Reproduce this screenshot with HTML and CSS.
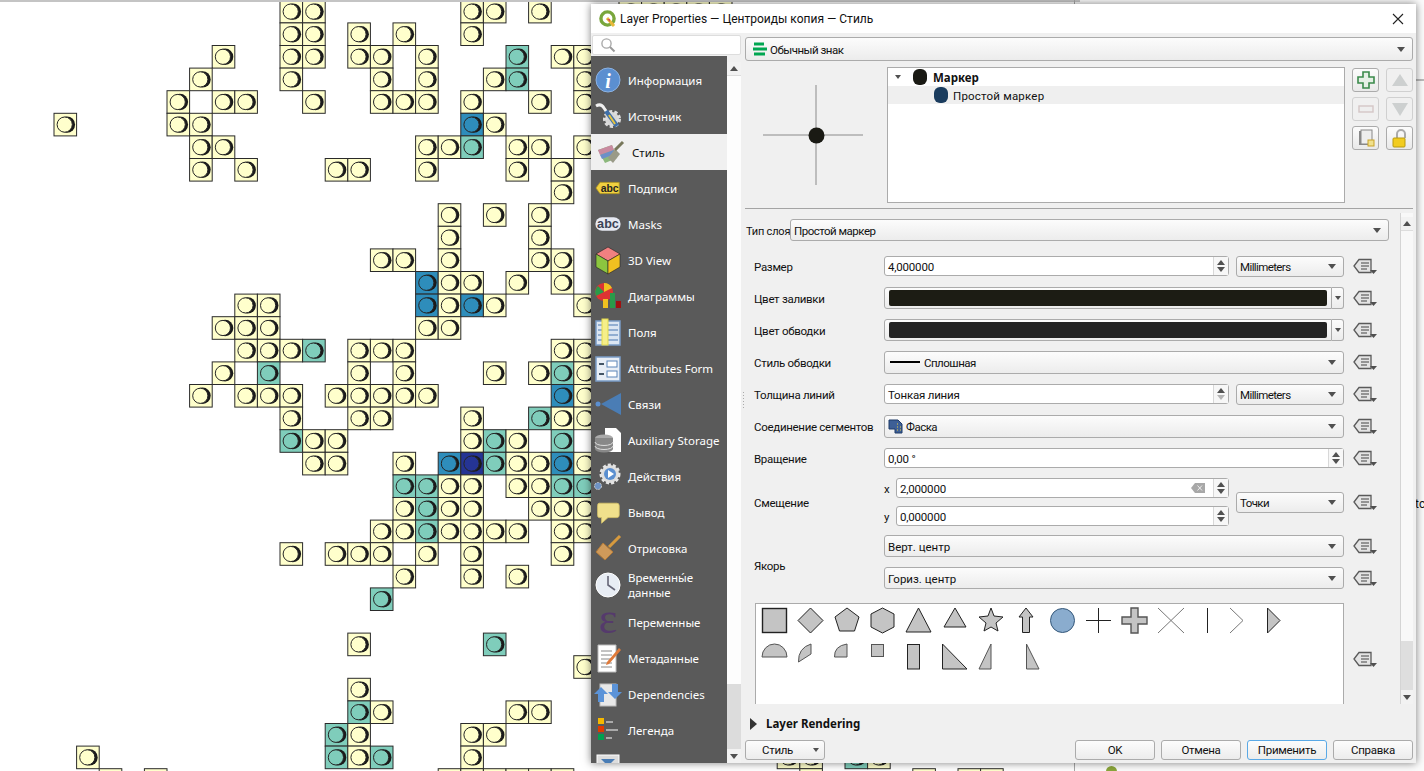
FILE: index.html
```html
<!DOCTYPE html>
<html lang="ru">
<head>
<meta charset="utf-8">
<title>Layer Properties</title>
<link rel="stylesheet" href="styles.css">
</head>
<body>
<svg class="defs" width="0" height="0">
  <symbol id="dd" viewBox="0 0 24 16">
    <path d="M1 8 L6 1.500 H18 V14.500 H6 Z" fill="#e4e4e4" stroke="#5a5a5a" stroke-width="1.300"/>
    <path d="M8 5 H16 M8 8 H16 M8 11 H14" stroke="#444" stroke-width="1.100"/>
    <path d="M17 12 H24 L20.500 16 Z" fill="#505050"/>
  </symbol>
</svg>
<svg id="map" class="map" width="1424" height="771"></svg>
<div class="toprule"></div>
<div class="sideline"></div>
<div class="backpanel"></div>
<div class="backrule"></div>
<div class="backtext">tc</div>
<div class="backdot"></div>

<div class="dialog">
  <header class="titlebar">
    <svg class="qgis" width="20" height="20" viewBox="0 0 20 20"><circle cx="9.500" cy="9.500" r="6.600" fill="#fff" stroke="#79a63c" stroke-width="3.400"/><path d="M9 9 L16 17" stroke="#e9b93a" stroke-width="3"/><path d="M9 10 L12 10 L12 13 Z" fill="#d9534f"/></svg>
    <span class="title">Layer Properties — Центроиды копия — Стиль</span>
    <svg class="close" width="12" height="12" viewBox="0 0 12 12"><path d="M1 1 L11 11 M11 1 L1 11" stroke="#222" stroke-width="1.100"/></svg>
  </header>
  <div class="dbody">
    <aside class="navcol">
      <div class="search"><svg width="16" height="16" viewBox="0 0 16 16"><circle cx="6.500" cy="6.500" r="4.600" fill="none" stroke="#aaa" stroke-width="1.400"/><path d="M10 10 L14.500 14.500" stroke="#999" stroke-width="2"/></svg></div>
      <div class="navwrap">
        <nav class="nav">
          <div class="item"><svg class="ic" viewBox="0 0 32 32"><circle cx="16" cy="16" r="12" fill="#5b8fd0" stroke="#8db3e2"/><text x="16" y="24" text-anchor="middle" class="glyph-i">i</text></svg><span>Информация</span></div>
          <div class="item"><svg class="ic" viewBox="0 0 32 32"><circle cx="20" cy="19" r="7" fill="#d7d7d7" stroke="#ddd" stroke-width="4" stroke-dasharray="3 2"/><path d="M4 6 Q9 3 12 8 L18 17" fill="none" stroke="#f0f0f0" stroke-width="3"/><path d="M14 11 L25 26" stroke="#3f6fa8" stroke-width="4.500"/><path d="M17 15 L23 24" stroke="#e9c53d" stroke-width="2"/></svg><span>Источник</span></div>
          <div class="item sel"><svg class="ic" viewBox="0 0 32 32"><path d="M3 14 L17 9 L22 22 L10 27 Z" fill="#8cb87c"/><path d="M3 14 L17 9 L19 14 L5 19 Z" fill="#c98aa0"/><path d="M5 19 L19 14 L20 18 L7 23 Z" fill="#6d8fc8"/><path d="M13 22 L20 13 L25 18 L18 27 Z" fill="#9a9a88"/><path d="M20 14 L28 6" stroke="#77775a" stroke-width="3"/></svg><span>Стиль</span></div>
          <div class="item"><svg class="ic" viewBox="-4 -4 40 40"><path d="M1 16 L6 9 H30 V23 H6 Z" fill="#f0d040" stroke="#b89a20"/><text x="18" y="20.500" text-anchor="middle" class="glyph-abc dark">abc</text></svg><span>Подписи</span></div>
          <div class="item"><svg class="ic" viewBox="-3 -3 38 38"><rect x="1" y="8" width="30" height="16" rx="8" fill="#e6e9f2"/><text x="16" y="21" text-anchor="middle" class="glyph-mask">abc</text></svg><span>Masks</span></div>
          <div class="item"><svg class="ic" viewBox="0 0 32 32"><path d="M16 3 L28 10 L16 17 L4 10 Z" fill="#f08080" stroke="#222" stroke-width=".6"/><path d="M4 10 L16 17 V30 L4 23 Z" fill="#8cc63f" stroke="#222" stroke-width=".6"/><path d="M28 10 L16 17 V30 L28 23 Z" fill="#f0c020" stroke="#222" stroke-width=".6"/></svg><span>3D View</span></div>
          <div class="item"><svg class="ic" viewBox="0 0 32 32"><circle cx="12" cy="12" r="9" fill="#d33"/><path d="M12 12 L12 3 A9 9 0 0 1 20 8 Z" fill="#f0c020"/><path d="M12 12 L4 16 A9 9 0 0 1 6 6 Z" fill="#2a9a4a"/><rect x="11" y="19" width="5" height="9" fill="#f0c020"/><rect x="18" y="13" width="5" height="15" fill="#2a9a4a"/><rect x="24" y="21" width="5" height="7" fill="#a01010"/></svg><span>Диаграммы</span></div>
          <div class="item"><svg class="ic" viewBox="0 0 32 32"><rect x="4" y="5" width="24" height="24" fill="#dce6f2" stroke="#7a9cc6" stroke-width="1.500"/><path d="M6 9 H26 M6 14 H26 M6 19 H26 M6 24 H26" stroke="#7a9cc6" stroke-width="1.500"/><rect x="10" y="3" width="6" height="26" fill="#f5ef8a" stroke="#e3d94a"/></svg><span>Поля</span></div>
          <div class="item"><svg class="ic" viewBox="0 0 32 32"><rect x="4" y="5" width="24" height="24" fill="#e8eef6" stroke="#7a9cc6" stroke-width="1.500"/><rect x="15" y="9" width="10" height="6" fill="#fff" stroke="#5a84b8"/><rect x="15" y="19" width="10" height="6" fill="#fff" stroke="#5a84b8"/><path d="M7 12 H12 M7 22 H12" stroke="#456" stroke-width="2"/></svg><span>Attributes Form</span></div>
          <div class="item"><svg class="ic" viewBox="0 0 32 32"><circle cx="6" cy="16" r="2.500" fill="#5b8fd0"/><path d="M9 16 L29 5 V27 Z" fill="#4a7db5"/></svg><span>Связи</span></div>
          <div class="item"><svg class="ic" viewBox="0 0 32 32"><path d="M13 4 H24 L29 9 V28 H13 Z" fill="#fff"/><ellipse cx="12" cy="14" rx="9" ry="3.500" fill="#aaa"/><path d="M3 14 V25 A9 3.500 0 0 0 21 25 V14 Z" fill="#888"/><path d="M3 18 A9 3.500 0 0 0 21 18 M3 22 A9 3.500 0 0 0 21 22" fill="none" stroke="#ddd"/></svg><span>Auxiliary Storage</span></div>
          <div class="item"><svg class="ic" viewBox="0 0 32 32"><circle cx="18" cy="14" r="9" fill="#ddd" stroke="#e4e4e4" stroke-width="3" stroke-dasharray="3 2"/><circle cx="18" cy="14" r="6" fill="#5b8fd0"/><path d="M16 10 L22 14 L16 18 Z" fill="#fff"/><circle cx="6" cy="26" r="3.500" fill="#6f93c4" stroke="#ccc" stroke-dasharray="2 1"/></svg><span>Действия</span></div>
          <div class="item"><svg class="ic" viewBox="-4 -4 40 40"><path d="M5 5 H27 Q30 5 30 8 V20 Q30 23 27 23 H16 L8 30 V23 H5 Q3 23 3 20 V8 Q3 5 5 5 Z" fill="#f0e08c" stroke="#d8c468"/></svg><span>Вывод</span></div>
          <div class="item"><svg class="ic" viewBox="0 0 32 32"><path d="M28 4 L17 15" stroke="#d79a3e" stroke-width="3"/><path d="M11 11 L21 20 L13 28 L4 20 Z" fill="#cf9a5a" stroke="#b27a38"/></svg><span>Отрисовка</span></div>
          <div class="item tall"><svg class="ic" viewBox="0 0 32 32"><circle cx="16" cy="16" r="12" fill="#e8edf4" stroke="#fff" stroke-width="1"/><path d="M16 7 V16 L23 21" fill="none" stroke="#667" stroke-width="1.600"/></svg><span>Временны́е<br>данные</span></div>
          <div class="item"><svg class="ic" viewBox="0 0 32 32"><text x="16" y="27" text-anchor="middle" class="glyph-eps">ε</text></svg><span>Переменные</span></div>
          <div class="item"><svg class="ic" viewBox="0 0 32 32"><path d="M6 3 H24 V30 H6 Z" fill="#fff" stroke="#bbb"/><path d="M9 9 H20 M9 13 H20 M9 17 H20 M9 21 H20 M9 25 H20" stroke="#888"/><path d="M15 20 L27 6 L29 8 L17 22 L14 23 Z" fill="#e07a3a"/></svg><span>Метаданные</span></div>
          <div class="item"><svg class="ic" viewBox="0 0 32 32"><rect x="8" y="6" width="16" height="22" fill="#e8e8e8" stroke="#bbb"/><path d="M2 16 L9 9 L16 16 H12 V24 H6 V16 Z" fill="#5b93d8"/><path d="M30 14 L23 21 L16 14 H20 V6 H26 V14 Z" fill="#5b93d8"/></svg><span>Dependencies</span></div>
          <div class="item"><svg class="ic" viewBox="0 0 32 32"><rect x="6" y="4" width="6" height="6" fill="#f5b800"/><rect x="6" y="12" width="6" height="6" fill="#e03a00"/><rect x="6" y="20" width="6" height="6" fill="#00a050"/><path d="M14 8 H21 M14 16 H26 M14 24 H20" stroke="#aaa" stroke-width="2"/></svg><span>Легенда</span></div>
          <div class="item"><svg class="ic" viewBox="0 0 32 32"><rect x="5" y="5" width="22" height="22" fill="#ddd" stroke="#fff"/><path d="M9 9 H23 L16 16 Z" fill="#4a7db5"/></svg><span>QGIS Server</span></div>
        </nav>
        <div class="navscroll">
          <div class="nsbtn top"><i class="tri up"></i></div>
          <div class="nstrack"></div>
          <div class="nsthumb"></div>
          <div class="nsbtn"><i class="tri down"></i></div>
        </div>
      </div>
    </aside>

    <main class="main">
      <div class="combo top-combo">
        <svg width="14" height="14" viewBox="0 0 14 14"><path d="M1 2 H11 M0 7 H14 M1 12 H12" stroke="#00a651" stroke-width="3"/></svg>
        <span>Обычный знак</span><i class="tri down"></i>
      </div>
      <section class="symbol">
        <div class="preview">
          <svg width="142" height="136" viewBox="0 0 142 136"><path d="M71 18 V118 M18 68 H118" stroke="#8a8a8a"/><ellipse cx="71.500" cy="68.500" rx="8" ry="8" fill="#1a1a14"/></svg>
        </div>
        <div class="tree">
          <div class="trow"><i class="tri down small"></i><i class="swatch black"></i><b>Маркер</b></div>
          <div class="trow child"><i class="swatch blue"></i><span>Простой маркер</span></div>
        </div>
        <div class="tools">
          <button class="tbtn"><svg width="20" height="20" viewBox="0 0 20 20"><path d="M7 2 H13 V7 H18 V13 H13 V18 H7 V13 H2 V7 H7 Z" fill="#e6f0e6" stroke="#3b8a4b" stroke-width="1.600"/></svg></button>
          <button class="tbtn off"><svg width="18" height="18" viewBox="0 0 18 18"><path d="M9 3 L17 15 H1 Z" fill="#cdd0d0"/></svg></button>
          <button class="tbtn off"><svg width="20" height="20" viewBox="0 0 20 20"><rect x="3" y="7" width="14" height="6" fill="#eee" stroke="#d4c6c6" stroke-width="1.400"/></svg></button>
          <button class="tbtn off"><svg width="18" height="18" viewBox="0 0 18 18"><path d="M9 16 L1 3 H17 Z" fill="#cdd0d0"/></svg></button>
          <button class="tbtn"><svg width="20" height="20" viewBox="0 0 20 20"><rect x="3" y="3" width="11" height="14" fill="#888"/><rect x="5" y="2" width="11" height="14" fill="#eee" stroke="#888"/><rect x="12" y="12" width="6" height="6" fill="#f0e08c" stroke="#c9a227"/></svg></button>
          <button class="tbtn"><svg width="20" height="20" viewBox="0 0 20 20"><path d="M7 10 V6 A4 4 0 0 1 15 6 V10" fill="none" stroke="#aaa" stroke-width="2"/><rect x="3" y="10" width="12" height="9" rx="1" fill="#f2cc1f" stroke="#b89a10"/></svg></button>
        </div>
      </section>
      <hr class="rule">
      <section class="scrollarea">
        <div class="form">
          <div class="typerow"><label>Тип слоя</label><div class="combo"><span>Простой маркер</span><i class="tri down"></i></div></div>
          <div class="frow">
            <label>Размер</label>
            <div class="pair"><div class="spin"><span>4,000000</span><div class="arrows"><i class="tri up"></i><i class="tri down"></i></div></div><div class="combo unit"><span>Millimeters</span><i class="tri down"></i></div></div>
            <svg class="dd"><use href="#dd"/></svg>
          </div>
          <div class="frow">
            <label>Цвет заливки</label>
            <div class="colorbtn"><div class="colorface"><i class="fill one"></i></div><div class="colordrop"><i class="tri down"></i></div></div>
            <svg class="dd"><use href="#dd"/></svg>
          </div>
          <div class="frow">
            <label>Цвет обводки</label>
            <div class="colorbtn"><div class="colorface"><i class="fill two"></i></div><div class="colordrop"><i class="tri down"></i></div></div>
            <svg class="dd"><use href="#dd"/></svg>
          </div>
          <div class="frow">
            <label>Стиль обводки</label>
            <div class="combo tall"><i class="line"></i><span>Сплошная</span><i class="tri down"></i></div>
            <svg class="dd"><use href="#dd"/></svg>
          </div>
          <div class="frow">
            <label>Толщина линий</label>
            <div class="pair"><div class="spin"><span>Тонкая линия</span><div class="arrows"><i class="tri up"></i><i class="tri down pale"></i></div></div><div class="combo unit"><span>Millimeters</span><i class="tri down"></i></div></div>
            <svg class="dd"><use href="#dd"/></svg>
          </div>
          <div class="frow">
            <label>Соединение сегментов</label>
            <div class="combo tall"><svg width="15" height="15" viewBox="0 0 15 15"><path d="M1 1 H10 L14 5 V14 H7 V10 H1 Z" fill="#3d5f96" stroke="#1f3a66"/><path d="M9 5 H10 M12 8 H13 M9 8 H10 M12 11 H13 M9 11 H10" stroke="#f0d040"/></svg><span>Фаска</span><i class="tri down"></i></div>
            <svg class="dd"><use href="#dd"/></svg>
          </div>
          <div class="frow">
            <label>Вращение</label>
            <div class="spin"><span>0,00 °</span><div class="arrows"><i class="tri up"></i><i class="tri down"></i></div></div>
            <svg class="dd"><use href="#dd"/></svg>
          </div>
          <div class="frow offset">
            <label>Смещение</label>
            <div class="pair">
              <div class="xy">
                <div class="xyrow"><em>x</em><div class="spin"><span>2,000000</span><svg class="clear" width="14" height="10" viewBox="0 0 14 10"><path d="M4 0 H14 V10 H4 L0 5 Z" fill="#a8a8a8"/><path d="M6.500 2.500 L11 7.500 M11 2.500 L6.500 7.500" stroke="#eee"/></svg><div class="arrows"><i class="tri up"></i><i class="tri down"></i></div></div></div>
                <div class="xyrow"><em>y</em><div class="spin"><span>0,000000</span><div class="arrows"><i class="tri up"></i><i class="tri down"></i></div></div></div>
              </div>
              <div class="combo unit"><span>Точки</span><i class="tri down"></i></div>
            </div>
            <svg class="dd"><use href="#dd"/></svg>
          </div>
          <div class="anchor">
            <label>Якорь</label>
            <div class="combo"><span>Верт. центр</span><i class="tri down"></i></div>
            <svg class="dd"><use href="#dd"/></svg>
            <div class="combo"><span>Гориз. центр</span><i class="tri down"></i></div>
            <svg class="dd"><use href="#dd"/></svg>
          </div>
          <div class="shapesrow">
            <div class="shapes">
              <svg width="588" height="101" viewBox="755 603 588 101">
                <g class="sh">
                  <rect x="762.500" y="608.500" width="24" height="24" stroke-width="1.400"/>
                  <path d="M810.500 608 L823 620.500 L810.500 633 L798 620.500 Z"/>
                  <path d="M847 608 L859 617 L854.500 631 L839.500 631 L835 617 Z"/>
                  <path d="M882.500 608 L894 614 L894 627 L882.500 633 L871 627 L871 614 Z"/>
                  <path d="M918.500 608 L931 632 L906 632 Z"/>
                  <path d="M955 608 L966 627 L944 627 Z"/>
                  <path d="M991 608 L994 616 L1003 617 L996 623 L998 631 L991 627 L984 631 L986 623 L979 617 L988 616 Z"/>
                  <path d="M1026 608 L1033 617 L1029.500 617 L1029.500 632.500 L1022.500 632.500 L1022.500 617 L1019 617 Z"/>
                  <ellipse cx="1062.500" cy="620.500" rx="12" ry="12" fill="#8aacce" stroke="#35587a"/>
                  <path d="M1086 620.500 H1111 M1098.500 608 V633" fill="none"/>
                  <path d="M1131 608 H1138 V617 H1147 V624 H1138 V633 H1131 V624 H1122 V617 H1131 Z" stroke="#555" stroke-width="1.400"/>
                  <path d="M1158 608 L1184 633 M1184 608 L1158 633" fill="none" stroke="#777"/>
                  <path d="M1207.500 608 V633" fill="none"/>
                  <path d="M1230 608 L1243 620.500 L1230 633" fill="none" stroke="#777"/>
                  <path d="M1267.500 608 L1280 620.500 L1267.500 633 Z"/>
                  <path d="M762 657 A12.500 13 0 0 1 787 657 Z" stroke="#555"/>
                  <path d="M811 644 Q798 648 798.500 662 L811 654 Z" stroke="#555"/>
                  <path d="M847 644 Q834 646 834.500 657 L847 657 Z" stroke="#555"/>
                  <rect x="871.500" y="644.500" width="12" height="12" stroke="#555"/>
                  <rect x="907.500" y="644.500" width="12" height="24.500"/>
                  <path d="M942.500 644 L967 669 L942.500 669 Z"/>
                  <path d="M991 644 L991 669 L979 669 Z" stroke="#555"/>
                  <path d="M1026.500 644 L1039 669 L1026.500 669 Z" stroke="#555"/>
                </g>
              </svg>
            </div>
            <svg class="dd"><use href="#dd"/></svg>
          </div>
        </div>
        <div class="vscroll">
          <div class="nsbtn top"><i class="tri up"></i></div>
          <div class="vtrack"></div>
          <div class="vthumb"></div>
          <div class="nsbtn"><i class="tri down"></i></div>
        </div>
      </section>
      <div class="rendering"><i class="tri right"></i><b>Layer Rendering</b></div>
      <footer class="buttons">
        <button class="btn style"><span>Стиль</span><i class="tri down small"></i></button>
        <div class="spacer"></div>
        <button class="btn">OK</button>
        <button class="btn">Отмена</button>
        <button class="btn focus">Применить</button>
        <button class="btn">Справка</button>
      </footer>
    </main>
  </div>
</div>
<div class="grip"></div>
<script src="map.js"></script>
</body>
</html>
```
FILE: styles.css
```css
* { box-sizing: border-box; }
html, body { margin: 0; height: 771px; overflow: hidden; background: #fff; }
body { position: relative; font: 11.5px Roboto, "Liberation Sans", sans-serif; color: #111; }
b { font-family: "Noto Sans", sans-serif; }
.defs { position: absolute; }
.map { position: absolute; left: 0; top: 0; }
.cell { stroke: #2a2a2a; stroke-width: 1; }
.y { fill: #ffffcc; }
.t { fill: #7fcdbb; }
.b { fill: #2e8dbb; }
.d { fill: #253494; }
.ink { fill: #1a1a1a; stroke: none; }
.ring { stroke: #262626; stroke-width: 1; }
.toprule { position: absolute; left: 0; top: 0; width: 100%; height: 2px; background: #c4c4c4; }
.backpanel { position: absolute; left: 1080px; top: 0; width: 344px; height: 771px; background: #fbfbfb; }
.sideline { position: absolute; left: 1074px; top: 0; width: 1px; height: 771px; background: #a8a8a8; }
.backrule { position: absolute; left: 1416px; top: 79px; width: 8px; height: 2px; background: #bbb; }
.backtext { position: absolute; left: 1415px; top: 497px; font-size: 12px; }
.backdot { position: absolute; left: 1106px; top: 766px; width: 11px; height: 11px; border-radius: 50%; background: #8aa53a; }

.dialog { position: absolute; left: 591px; top: 4px; width: 825px; height: 759px; background: #f0f0f0; box-shadow: 0 0 8px rgba(0,0,0,.5); display: flex; flex-direction: column; }
.titlebar { height: 29px; background: #fff; display: flex; align-items: center; padding: 0 10px 0 7px; flex: none; }
.qgis { flex: none; }
.title { margin-left: 2px; font-size: 12px; flex: 1; }
.close { margin-right: 2px; }
.dbody { flex: 1; display: flex; min-height: 0; }

.navcol { width: 150px; flex: none; display: flex; flex-direction: column; }
.search { height: 20px; margin: 2px 0 0 1px; background: #fff; border: 1px solid #ddd; border-radius: 2px; display: flex; align-items: center; padding-left: 7px; flex: none; }
.navwrap { flex: 1; display: flex; min-height: 0; margin-top: 1px; }
.nav { width: 136px; background: #5a5a5a; padding-top: 6px; overflow: hidden; color: #fff; flex: none; font-family: "Noto Sans", sans-serif; }
.item { height: 36px; display: flex; align-items: center; padding-left: 1px; gap: 4px; line-height: 15px; white-space: nowrap; }
.item.tall { height: 38px; }
.item.sel { background: #f0f0f0; color: #111; padding-left: 4px; gap: 5px; }
.ic { width: 32px; height: 32px; flex: none; overflow: visible; }
.glyph-i { font: italic bold 20px "Liberation Serif", serif; fill: #fff; }
.glyph-abc { font: bold 13px "Liberation Sans", sans-serif; }
.dark { fill: #222; }
.glyph-mask { font: bold 15px "Liberation Sans", sans-serif; fill: #3b4256; }
.glyph-eps { font: 44px "Liberation Serif", serif; fill: #553a6c; }
.navscroll { flex: 1; display: flex; flex-direction: column; padding-top: 6px; }
.nsbtn { height: 14px; flex: none; display: flex; align-items: center; justify-content: center; background: #f2f2f2; }
.nsbtn.top { border-bottom: 1px solid #ddd; }
.nstrack { flex: 1; background: #fdfdfd; }
.nsthumb { height: 65px; background: #dcdcdc; }

.main { flex: 1; min-width: 0; padding: 4px 3px 2px 4px; display: flex; flex-direction: column; }
.combo { position: relative; display: flex; align-items: center; gap: 3px; height: 22px; padding: 0 4px 0 3px; border: 1px solid #ababab; border-radius: 3px; background: linear-gradient(#fcfcfc, #ececec); white-space: nowrap; }
.combo span, .spin > span, .form label, .trow.child span, .xyrow em { padding-top: 2px; }
.combo span { letter-spacing: -.5px; }
.anchor .combo span { letter-spacing: 0; }
.unit span { letter-spacing: -.6px; }
.form label { letter-spacing: -.3px; }
.spin > span { letter-spacing: -.2px; }
.combo .tri.down { position: absolute; right: 7px; top: 50%; margin-top: -2px; }
.top-combo { height: 24px; padding-left: 7px; flex: none; }
.tri { display: block; width: 0; height: 0; border-style: solid; border-color: transparent; }
.tri.down { border-width: 5px 4px 0; border-top-color: #505050; }
.tri.up { border-width: 0 4px 5px; border-bottom-color: #505050; }
.tri.right { border-width: 6px 0 6px 7px; border-left-color: #333; }
.tri.small { border-width: 4px 3.500px 0; }
.tri.pale { border-top-color: #b5b5b5; }

.symbol { display: flex; margin-top: 6px; height: 136px; flex: none; }
.preview { width: 142px; flex: none; }
.preview svg { display: block; }
.tree { width: 458px; flex: none; background: #fff; border: 1px solid #ababab; }
.trow { height: 18px; display: flex; align-items: center; }
.trow:first-child { padding-left: 7px; height: 18px; }
.trow b { margin-left: 6px; }
.trow .tri { margin-right: 12px; }
.trow.child { background: #efefef; padding-left: 46px; }
.trow.child span { margin-left: 5px; letter-spacing: .2px; }
.swatch { display: block; width: 14px; height: 16px; border-radius: 6px; }
.swatch.black { background: #1a1a14; }
.swatch.blue { background: #1a3c5e; }
.tools { margin-left: 7px; display: grid; grid-template-columns: 27px 27px; grid-auto-rows: 24px; gap: 5px 7px; align-content: start; margin-top: 1px; }
.tbtn { padding: 0; border: 1px solid #ababab; border-radius: 3px; background: linear-gradient(#fcfcfc, #e9e9e9); display: flex; align-items: center; justify-content: center; }
.tbtn.off { border-color: #d0d0d0; background: #f0f0f0; }
.rule { margin: 5px 0 0; border: 0; height: 1px; background: #a4a4a4; flex: none; }

.scrollarea { display: flex; margin-top: 4px; height: 491px; flex: none; overflow: hidden; }
.form { width: 655px; flex: none; padding-top: 6px; }
.vscroll { margin-left: 0; width: 13px; border-left: 1px solid #d4d4d4; display: flex; flex-direction: column; padding-top: 4px; background: #f8f8f8; }
.vtrack { flex: 1; }
.vthumb { height: 49px; background: #dedede; }
.typerow { display: flex; align-items: center; height: 22px; margin-left: 1px; margin-bottom: 9px; }
.typerow label { width: 44px; flex: none; white-space: nowrap; font-size: 11px; letter-spacing: -.2px; }
.typerow .combo { width: 599px; }
.frow { display: grid; grid-template-columns: 130px 460px 24px; column-gap: 0; align-items: center; height: 32px; padding-left: 9px; }
.frow label, .anchor label { white-space: nowrap; }
.frow .dd, .anchor .dd, .shapesrow .dd { width: 24px; height: 16px; margin-left: 9px; overflow: visible; }
.pair { display: flex; align-items: center; gap: 7px; }
.pair > .unit { width: 108px; flex: none; height: 21px; }
.pair > .spin, .xy { flex: 1; min-width: 0; }
.spin { height: 20px; display: flex; align-items: center; background: #fff; border: 1px solid #ababab; border-radius: 3px; padding-left: 3px; }
.spin > span { flex: 1; }
.arrows { width: 15px; align-self: stretch; border-left: 1px solid #d8d8d8; display: flex; flex-direction: column; align-items: center; justify-content: center; gap: 2px; background: #f7f7f7; flex: none; }
.arrows .tri { border-width: 0 4px 5px; }
.arrows .tri.down { border-width: 5px 4px 0; }
.clear { margin-right: 8px; flex: none; }
.colorbtn { display: flex; height: 22px; }
.colorface { flex: 1; border: 1px solid #ababab; border-radius: 3px 0 0 3px; background: linear-gradient(#fcfcfc, #ececec); padding: 2px 4px; }
.fill { display: block; height: 100%; border-radius: 2px; }
.fill.one { background: #1c1c14; }
.fill.two { background: #232323; }
.colordrop { width: 12px; border: 1px solid #ababab; border-left: 0; border-radius: 0 3px 3px 0; background: linear-gradient(#fcfcfc, #ececec); display: flex; align-items: center; justify-content: center; }
.colordrop .tri { border-width: 4px 3.500px 0; }
.combo.tall { height: 23px; }
.line { display: block; width: 30px; height: 2px; background: #000; margin: 0 1px 0 2px; }
.frow.offset { height: 56px; padding-top: 0; }
.xy { display: flex; flex-direction: column; gap: 8px; }
.xyrow { display: flex; align-items: center; }
.xyrow em { font-style: normal; width: 12px; flex: none; }
.xyrow .spin { flex: 1; min-width: 0; }
.anchor { display: grid; grid-template-columns: 130px 460px 24px; grid-auto-rows: 32px; align-items: center; padding-left: 9px; }
.anchor label { grid-row: 1 / span 2; padding-top: 8px; }
.shapesrow { display: flex; align-items: center; margin: 9px 0 0 10px; height: 101px; }
.shapes { width: 589px; height: 101px; background: #fff; border: 1px solid #ababab; border-bottom: 0; flex: none; overflow: hidden; }
.shapes svg { display: block; margin: -1px 0 0 -1px; }
.sh { fill: #c4c4c4; stroke: #222; stroke-width: 1; }
.shapesrow .dd { margin-top: 10px; }

.rendering { height: 36px; flex: none; display: flex; align-items: center; padding-left: 5px; gap: 9px; padding-top: 3px; }
.buttons { display: flex; gap: 6px; height: 20px; flex: none; }
.btn { position: relative; width: 80px; height: 20px; padding: 0; font: inherit; letter-spacing: -.3px; color: #111; border: 1px solid #ababab; border-radius: 3px; background: linear-gradient(#fcfcfc, #ececec); }
.btn.focus { border-color: #5aa9e6; }
.btn.style span { margin-right: 15px; }
.btn.style .tri { position: absolute; right: 5px; top: 7px; }
.spacer { flex: 1; }
.grip { position: absolute; left: 743px; top: 392px; width: 1px; height: 16px; background: repeating-linear-gradient(#aaa 0 1px, transparent 1px 3px); }
```
FILE: map.js
```js
// Each string lists the occupied grid columns of one map row; a suffix gives the class colour.
var rows = [
  "10 11 18 19 21 25 26 27 28 29", "10 11 13 15 18", "7 10 11 13 14 16 20t 22 23",
  "6 10 14 16 19 20t 23", "5 7 8 11 14 15 16 18 21 23", "0 5 6 18b 19",
  "6 7 16 17 18t 20 21 23", "6 8 12 13 16 20 22", "22", "17 19 21", "17 21",
  "14 15 17 21 22", "16b 17 18 20 22", "8 9 16b 17 18b 19 23", "7 8 9 16 17",
  "8 9 10 11t 13 14 15 22 23", "7 9t 13 15 19 21 22t 23",
  "6 8 9 10 12 13 14 15 16 22b 23", "10 13 14 18 21t 22 23",
  "10t 11 12 18 19t 20 22t", "11 12 15 17b 18d 19t 20 21 22b 23",
  "15t 16t 17 18 20 21 22t 23t", "15 16t 17 18 21 22 23",
  "14 15 16t 17 18 19 20 22 23", "10 12 13 14 16 18 22", "15 18 20", "14t", "",
  "13 19t", "23", "13", "13t 14 20 21", "12t 13 18 19",
  "1 12t 13 14t 18 32 33 35t 36", "2 4 17 18 19 20 21 22 33 38 40 41"
];
var P = 22.6, NS = "http://www.w3.org/2000/svg", map = document.getElementById("map");
function add(tag, attrs) {
  var el = document.createElementNS(NS, tag);
  for (var k in attrs) el.setAttribute(k, attrs[k]);
  map.appendChild(el);
}
rows.forEach(function (row, r) {
  row.split(" ").forEach(function (tok) {
    if (!tok) return;
    var c = parseInt(tok, 10), cls = tok.replace(/\d+/, "") || "y";
    var x = 54 + P * c, y = 0.3 + P * r;
    add("rect", { x: x, y: y, width: P, height: P, "class": "cell " + cls });
    add("circle", { cx: x + 12.9, cy: y + 11.3, r: 8.2, "class": "ink" });
    add("circle", { cx: x + 10.7, cy: y + 11.3, r: 7.6, "class": "ring " + cls });
  });
});
```
